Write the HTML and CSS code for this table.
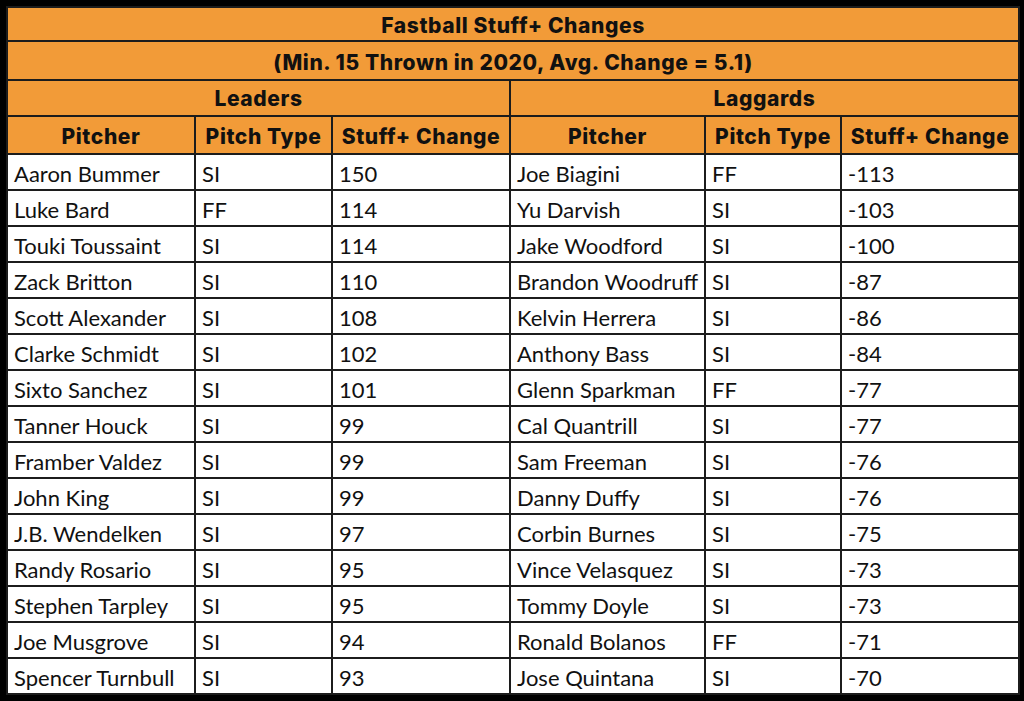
FILE: index.html
```html
<!DOCTYPE html>
<html>
<head>
<meta charset="utf-8">
<link rel="stylesheet" href="styles.css">
</head>
<body>
<div class="frame">
<table class="stuff">
  <colgroup>
    <col class="c1"><col class="c2"><col class="c3"><col class="c4"><col class="c5"><col class="c6">
  </colgroup>
  <thead>
    <tr class="title"><th colspan="6">Fastball Stuff+ Changes</th></tr>
    <tr class="sub"><th colspan="6">(Min. 15 Thrown in 2020, Avg. Change = 5.1)</th></tr>
    <tr class="group"><th colspan="3">Leaders</th><th colspan="3">Laggards</th></tr>
    <tr class="head"><th>Pitcher</th><th>Pitch Type</th><th>Stuff+ Change</th><th>Pitcher</th><th>Pitch Type</th><th>Stuff+ Change</th></tr>
  </thead>
  <tbody>
    <tr><td>Aaron Bummer</td><td>SI</td><td>150</td><td>Joe Biagini</td><td>FF</td><td>-113</td></tr>
    <tr><td>Luke Bard</td><td>FF</td><td>114</td><td>Yu Darvish</td><td>SI</td><td>-103</td></tr>
    <tr><td>Touki Toussaint</td><td>SI</td><td>114</td><td>Jake Woodford</td><td>SI</td><td>-100</td></tr>
    <tr><td>Zack Britton</td><td>SI</td><td>110</td><td>Brandon Woodruff</td><td>SI</td><td>-87</td></tr>
    <tr><td>Scott Alexander</td><td>SI</td><td>108</td><td>Kelvin Herrera</td><td>SI</td><td>-86</td></tr>
    <tr><td>Clarke Schmidt</td><td>SI</td><td>102</td><td>Anthony Bass</td><td>SI</td><td>-84</td></tr>
    <tr><td>Sixto Sanchez</td><td>SI</td><td>101</td><td>Glenn Sparkman</td><td>FF</td><td>-77</td></tr>
    <tr><td>Tanner Houck</td><td>SI</td><td>99</td><td>Cal Quantrill</td><td>SI</td><td>-77</td></tr>
    <tr><td>Framber Valdez</td><td>SI</td><td>99</td><td>Sam Freeman</td><td>SI</td><td>-76</td></tr>
    <tr><td>John King</td><td>SI</td><td>99</td><td>Danny Duffy</td><td>SI</td><td>-76</td></tr>
    <tr><td>J.B. Wendelken</td><td>SI</td><td>97</td><td>Corbin Burnes</td><td>SI</td><td>-75</td></tr>
    <tr><td>Randy Rosario</td><td>SI</td><td>95</td><td>Vince Velasquez</td><td>SI</td><td>-73</td></tr>
    <tr><td>Stephen Tarpley</td><td>SI</td><td>95</td><td>Tommy Doyle</td><td>SI</td><td>-73</td></tr>
    <tr><td>Joe Musgrove</td><td>SI</td><td>94</td><td>Ronald Bolanos</td><td>FF</td><td>-71</td></tr>
    <tr><td>Spencer Turnbull</td><td>SI</td><td>93</td><td>Jose Quintana</td><td>SI</td><td>-70</td></tr>
  </tbody>
</table>
</div>
</body>
</html>
```

FILE: styles.css
```css
html, body {
  margin: 0;
  padding: 0;
  background: #000;
}
.frame {
  width: 1024px;
  height: 701px;
  padding: 6px 6px 0 6px;
  box-sizing: border-box;
  background: #000;
  overflow: hidden;
}
.stuff {
  border-collapse: collapse;
  table-layout: fixed;
  width: 1012px;
  background: #fff;
  color: #111;
}
.c1 { width: 188px; }
.c2 { width: 137px; }
.c3 { width: 178px; }
.c4 { width: 195px; }
.c5 { width: 136px; }
.c6 { width: 178px; }
.stuff th, .stuff td {
  border: 2px solid #1c1c1c;
  padding: 0;
  white-space: nowrap;
  overflow: hidden;
  line-height: 24px;
  vertical-align: middle;
}
.stuff th {
  background: #f29b38;
  font-family: "Inter", "DejaVu Sans", sans-serif;
  font-weight: 800;
  font-size: 21px;
  letter-spacing: 0.6px;
  text-align: center;
  color: #111;
}
.title th { height: 29px; padding-top: 3px; }
.sub th { height: 33px; padding-top: 4px; }
.group th { height: 32px; padding-top: 2px; }
.head th { height: 32px; padding-top: 4px; }
.stuff td {
  font-family: "Lato", "Liberation Sans", sans-serif;
  font-size: 22px;
  height: 31px;
  padding-top: 3px;
  padding-left: 6px;
  text-align: left;
}
```
